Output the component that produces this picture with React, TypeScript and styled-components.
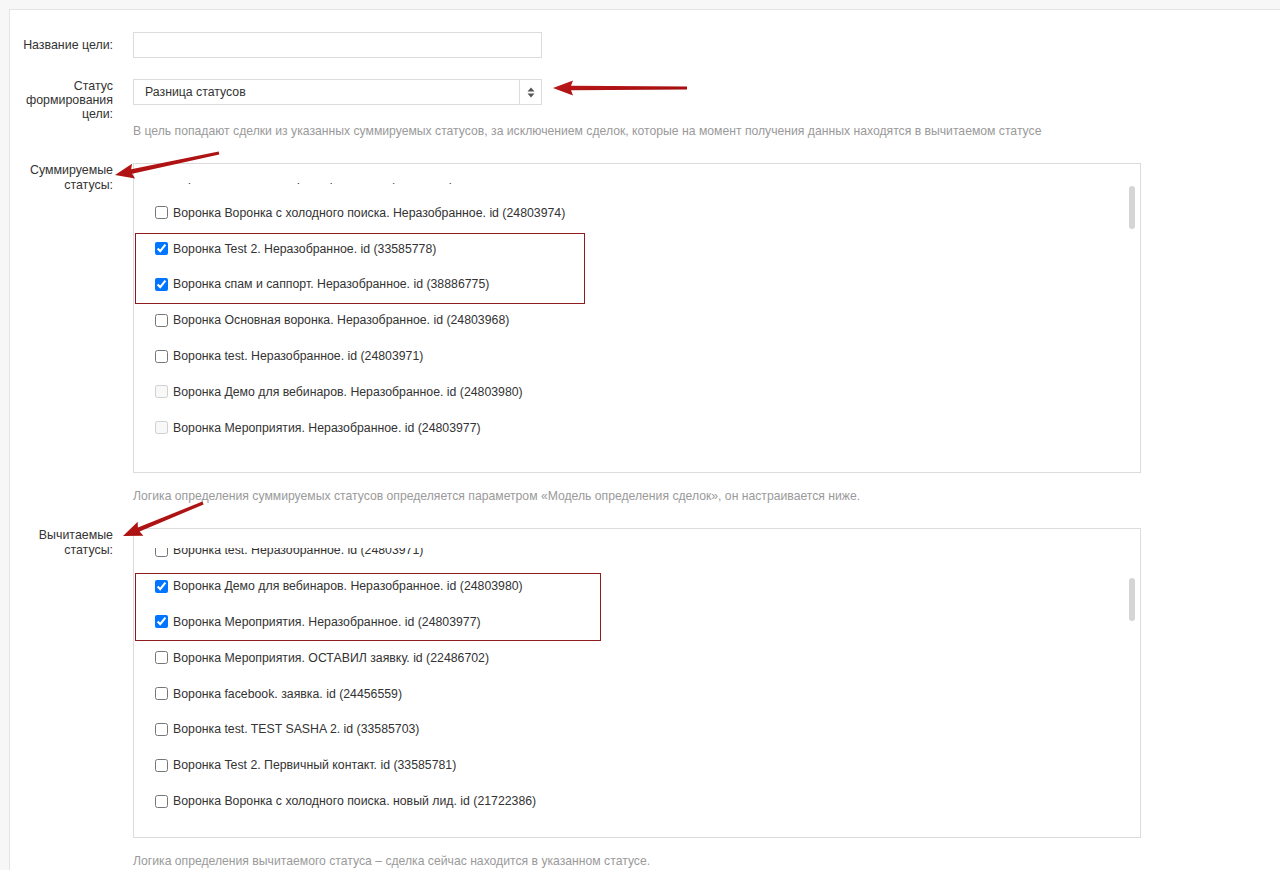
import React, { useLayoutEffect, useRef } from 'react';
import styled, { createGlobalStyle } from 'styled-components';

const GlobalStyle = createGlobalStyle`
  html, body { margin: 0; padding: 0; background: #f7f7f7; overflow: hidden; }
  body { font-family: "Liberation Sans", Arial, sans-serif; color: #333; }
  * { box-sizing: border-box; }
`;

const Page = styled.div`
  position: relative;
  height: 870px;
  padding: 9px 0 0 9px;
  overflow: hidden;
`;

const Panel = styled.div`
  background: #fff;
  border: 1px solid #e4e4e4;
  margin-right: -20px;
  min-height: 900px;
  padding: 22px 0 0 3px;
  display: flex;
  flex-direction: column;
`;

const Row = styled.div<{ $mt?: number }>`
  display: flex;
  align-items: flex-start;
  gap: 20px;
  margin-top: ${(p) => p.$mt ?? 0}px;
`;

const Label = styled.label<{ $pt?: number; $lh?: number }>`
  width: 100px;
  flex: none;
  text-align: right;
  font-size: 12.4px;
  line-height: ${(p) => p.$lh ?? 14}px;
  padding-top: ${(p) => p.$pt ?? 0}px;
  color: #333;
`;

const Control = styled.div`
  display: flex;
  flex-direction: column;
`;

const TextInput = styled.input`
  width: 409px;
  height: 26px;
  border: 1px solid #dcdcdc;
  border-radius: 0;
  background: #fff;
  padding: 0 11px;
  font: 12.3px "Liberation Sans", Arial, sans-serif;
  outline: none;
`;

const SelectBox = styled.div`
  width: 409px;
  height: 26px;
  border: 1px solid #dcdcdc;
  display: flex;
  align-items: stretch;
  background: #fff;
`;

const SelectValue = styled.div`
  flex: 1;
  display: flex;
  align-items: center;
  padding-left: 11px;
  font-size: 12.3px;
  color: #333;
`;

const SelectArrow = styled.div`
  width: 22px;
  border-left: 1px solid #dcdcdc;
  display: flex;
  align-items: center;
  justify-content: center;
`;

const Hint = styled.div<{ $mt: number }>`
  margin-top: ${(p) => p.$mt}px;
  font-size: 12.2px;
  line-height: 16px;
  color: #9a9a9a;
  white-space: nowrap;
`;

const ListBox = styled.div`
  position: relative;
  width: 1008px;
  height: 310px;
  border: 1px solid #dcdcdc;
  padding: 19px 0;
  background: #fff;
`;

const ScrollArea = styled.div`
  height: 270px;
  overflow: hidden;
`;

const Item = styled.label`
  display: flex;
  align-items: center;
  gap: 5px;
  height: 35.83px;
  padding-left: 21px;
  font-size: 12.3px;
  color: #333;
  white-space: nowrap;
`;

const Check = styled.input.attrs({ type: 'checkbox' })`
  margin: 0;
  width: 13px;
  height: 13px;
  flex: none;
`;

const Thumb = styled.div<{ $top: number; $h: number }>`
  position: absolute;
  right: 5px;
  top: ${(p) => p.$top}px;
  height: ${(p) => p.$h}px;
  width: 6px;
  border-radius: 3px;
  background: #d5d5d5;
`;

const Highlight = styled.div<{ $x: number; $y: number; $w: number; $h: number }>`
  position: absolute;
  left: ${(p) => p.$x}px;
  top: ${(p) => p.$y}px;
  width: ${(p) => p.$w}px;
  height: ${(p) => p.$h}px;
  border: 1.5px solid #8e1c1c;
  pointer-events: none;
`;

const Overlay = styled.svg`
  position: absolute;
  left: 0;
  top: 0;
  width: 1280px;
  height: 870px;
  pointer-events: none;
`;

type Entry = { text: string; checked?: boolean; disabled?: boolean };

const sumItems: Entry[] = [
  { text: 'Воронка facebook. Неразобранное. id (24456553)' },
  { text: 'Воронка Воронка с холодного поиска. Неразобранное. id (24803974)' },
  { text: 'Воронка Test 2. Неразобранное. id (33585778)', checked: true },
  { text: 'Воронка спам и саппорт. Неразобранное. id (38886775)', checked: true },
  { text: 'Воронка Основная воронка. Неразобранное. id (24803968)' },
  { text: 'Воронка test. Неразобранное. id (24803971)' },
  { text: 'Воронка Демо для вебинаров. Неразобранное. id (24803980)', disabled: true },
  { text: 'Воронка Мероприятия. Неразобранное. id (24803977)', disabled: true },
  { text: 'Воронка Мероприятия. ОСТАВИЛ заявку. id (22486702)' },
  { text: 'Воронка facebook. заявка. id (24456559)' },
];

const subItems: Entry[] = [
  { text: 'Воронка facebook. Неразобранное. id (24456553)' },
  { text: 'Воронка Воронка с холодного поиска. Неразобранное. id (24803974)' },
  { text: 'Воронка Test 2. Неразобранное. id (33585778)', disabled: true },
  { text: 'Воронка спам и саппорт. Неразобранное. id (38886775)', disabled: true },
  { text: 'Воронка test. Неразобранное. id (24803971)' },
  { text: 'Воронка Демо для вебинаров. Неразобранное. id (24803980)', checked: true },
  { text: 'Воронка Мероприятия. Неразобранное. id (24803977)', checked: true },
  { text: 'Воронка Мероприятия. ОСТАВИЛ заявку. id (22486702)' },
  { text: 'Воронка facebook. заявка. id (24456559)' },
  { text: 'Воронка test. TEST SASHA 2. id (33585703)' },
  { text: 'Воронка Test 2. Первичный контакт. id (33585781)' },
  { text: 'Воронка Воронка с холодного поиска. новый лид. id (21722386)' },
  { text: 'Воронка Основная воронка. Первичный контакт. id (24803969)' },
];

function StatusList({ items, offset, thumbTop }: { items: Entry[]; offset: number; thumbTop: number }) {
  const ref = useRef<HTMLDivElement>(null);
  useLayoutEffect(() => {
    if (ref.current) ref.current.scrollTop = offset;
  }, [offset]);
  return (
    <ListBox>
      <ScrollArea ref={ref}>
        {items.map((it, i) => (
          <Item key={i}>
            <Check defaultChecked={it.checked} disabled={it.disabled} />
            <span>{it.text}</span>
          </Item>
        ))}
      </ScrollArea>
      <Thumb $top={thumbTop} $h={43} />
    </ListBox>
  );
}

function arrowPath(tx: number, ty: number, hx: number, hy: number, headLen: number, headW: number, tailW: number, neckW: number) {
  const dx = hx - tx;
  const dy = hy - ty;
  const len = Math.hypot(dx, dy);
  const ux = dx / len;
  const uy = dy / len;
  const nx = -uy;
  const ny = ux;
  const bx = hx - ux * headLen;
  const by = hy - uy * headLen;
  const pts: [number, number][] = [
    [tx + nx * tailW / 2, ty + ny * tailW / 2],
    [bx + nx * neckW / 2, by + ny * neckW / 2],
    [bx + nx * headW / 2 - ux * 2, by + ny * headW / 2 - uy * 2],
    [hx, hy],
    [bx - nx * headW / 2 - ux * 2, by - ny * headW / 2 - uy * 2],
    [bx - nx * neckW / 2, by - ny * neckW / 2],
    [tx - nx * tailW / 2, ty - ny * tailW / 2],
  ];
  return 'M' + pts.map((p) => p[0].toFixed(1) + ' ' + p[1].toFixed(1)).join(' L') + ' Z';
}

function Arrows() {
  return (
    <Overlay viewBox="0 0 1280 870">
      <defs>
        <linearGradient id="ar" x1="0" y1="0" x2="1" y2="1">
          <stop offset="0" stopColor="#c0191a" />
          <stop offset="1" stopColor="#9d0c0c" />
        </linearGradient>
      </defs>
      <path d={arrowPath(687, 88, 553, 88, 18, 15, 3, 4.5)} fill="url(#ar)" strokeLinejoin="round" />
      <path d={arrowPath(219, 153, 115, 175, 17, 15, 3, 4.5)} fill="url(#ar)" strokeLinejoin="round" />
      <path d={arrowPath(203, 503, 123, 536, 17, 15, 3, 4.5)} fill="url(#ar)" strokeLinejoin="round" />
    </Overlay>
  );
}

export default function App() {
  return (
    <Page>
      <GlobalStyle />
      <Panel>
        <Row>
          <Label $pt={6}>Название цели:</Label>
          <Control>
            <TextInput type="text" />
          </Control>
        </Row>
        <Row $mt={21}>
          <Label $lh={14}>Статус формирования цели:</Label>
          <Control>
            <SelectBox>
              <SelectValue>Разница статусов</SelectValue>
              <SelectArrow>
                <svg width="8" height="11" viewBox="0 0 8 11">
                  <path d="M4 0.5 L7.5 4.5 L0.5 4.5 Z" fill="#555" />
                  <path d="M4 10.5 L7.5 6.5 L0.5 6.5 Z" fill="#555" />
                </svg>
              </SelectArrow>
            </SelectBox>
            <Hint $mt={18}>
              В цель попадают сделки из указанных суммируемых статусов, за исключением сделок, которые на момент получения данных находятся в вычитаемом статусе
            </Hint>
          </Control>
        </Row>
        <Row $mt={24}>
          <Label $lh={15}>Суммируемые статусы:</Label>
          <Control>
            <StatusList items={sumItems} offset={24} thumbTop={22} />
            <Hint $mt={15}>
              Логика определения суммируемых статусов определяется параметром «Модель определения сделок», он настраивается ниже.
            </Hint>
          </Control>
        </Row>
        <Row $mt={24}>
          <Label $lh={15}>Вычитаемые статусы:</Label>
          <Control>
            <StatusList items={subItems} offset={159} thumbTop={49} />
            <Hint $mt={15}>
              Логика определения вычитаемого статуса – сделка сейчас находится в указанном статусе.
            </Hint>
          </Control>
        </Row>
      </Panel>
      <Highlight $x={135} $y={233} $w={450} $h={71} />
      <Highlight $x={135} $y={573} $w={466} $h={68} />
      <Arrows />
    </Page>
  );
}
